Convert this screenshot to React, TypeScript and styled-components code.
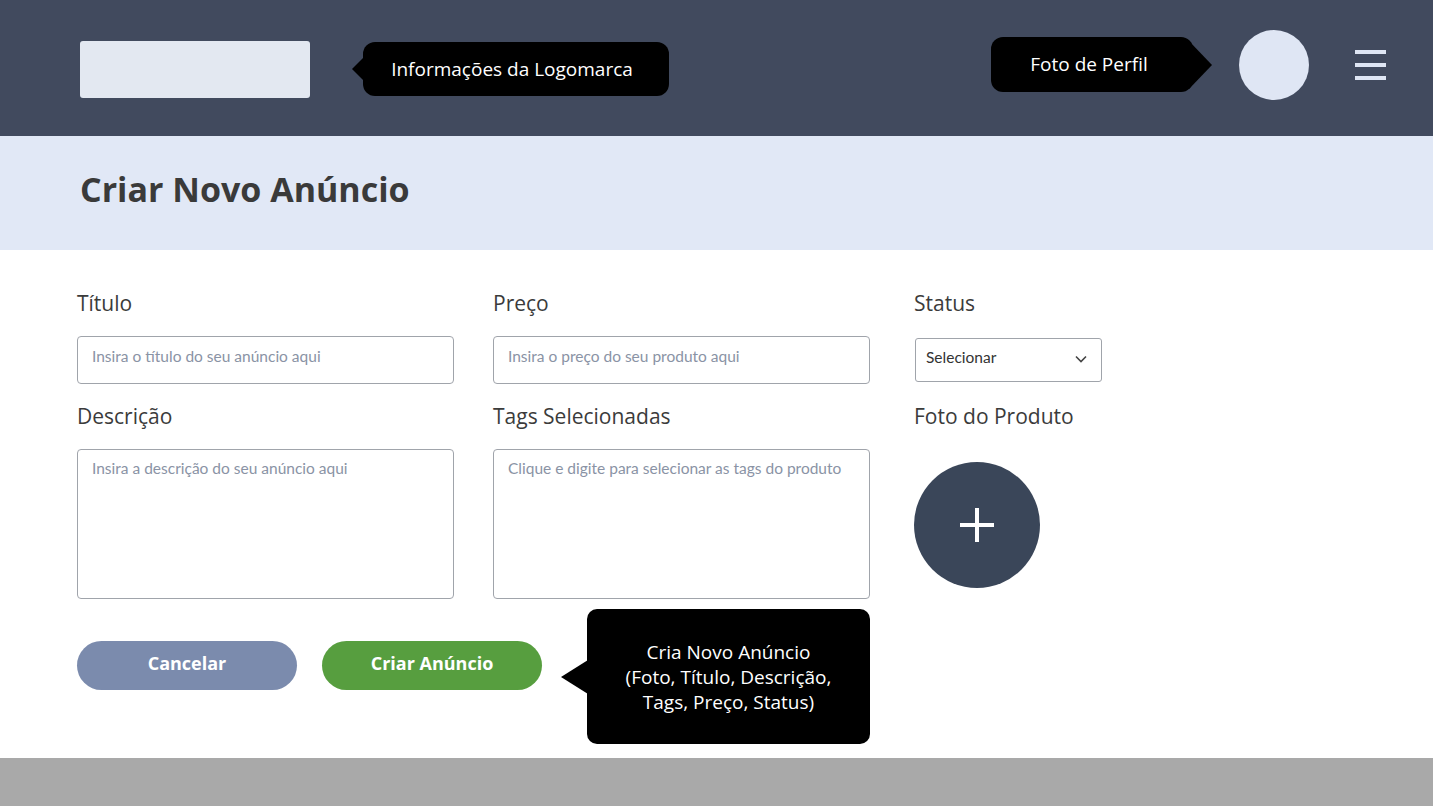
import React from "react";
import styled, { createGlobalStyle } from "styled-components";

const Global = createGlobalStyle`
  html, body { margin: 0; padding: 0; background: #ffffff; }
  body { font-family: "Open Sans", "Noto Sans", sans-serif; }
  * { box-sizing: border-box; }
`;

const Page = styled.div`
  width: 1433px;
  height: 806px;
  display: flex;
  flex-direction: column;
  overflow: hidden;
`;

const Header = styled.header`
  height: 136px;
  background: #414a5e;
  display: flex;
  align-items: center;
  padding: 0 47px 0 80px;
`;

const LogoBox = styled.div`
  width: 230px;
  height: 57px;
  background: #e3e8f1;
  border-radius: 3px;
  margin-top: 3px;
`;

const Spacer = styled.div`
  flex: 1;
`;

const Bubble = styled.div<{
  $side: "left" | "right";
  $w: number;
  $h: number;
  $aw: number;
  $ah: number;
}>`
  position: relative;
  width: ${(p) => p.$w}px;
  height: ${(p) => p.$h}px;
  background: #000;
  color: #fff;
  border-radius: 12px;
  display: flex;
  align-items: center;
  justify-content: center;
  text-align: center;
  font-family: "Open Sans", "Noto Sans", sans-serif;
  font-size: 19px;
  line-height: 25px;
  &::before {
    content: "";
    position: absolute;
    top: 50%;
    transform: translateY(-50%);
    border-top: ${(p) => p.$ah}px solid transparent;
    border-bottom: ${(p) => p.$ah}px solid transparent;
    ${(p) =>
      p.$side === "left"
        ? `right: calc(100% - 1px); border-right: ${p.$aw}px solid #000;`
        : `left: calc(100% - 4px); border-left: ${p.$aw}px solid #000;`}
  }
`;

const LogoTip = styled(Bubble)`
  margin-left: 53px;
  margin-top: 2px;
  padding-left: 4px;
  padding-right: 12px;
`;

const ProfileTip = styled(Bubble)`
  margin-top: -7px;
  padding-right: 6px;
`;

const Avatar = styled.div`
  width: 70px;
  height: 70px;
  border-radius: 50%;
  background: #dfe6f4;
  margin-left: 46px;
  margin-top: -6px;
`;

const Burger = styled.div`
  margin-left: 46px;
  margin-top: -6px;
  width: 31px;
  display: flex;
  flex-direction: column;
  gap: 9.5px;
  span {
    display: block;
    height: 3.5px;
    background: #dfe6f4;
  }
`;

const TitleBand = styled.div`
  height: 114px;
  background: #e1e8f6;
  display: flex;
  align-items: center;
  padding-left: 80px;
`;

const Title = styled.h1`
  margin: 0 0 9px 0;
  font-family: "Open Sans", "Noto Sans", sans-serif;
  font-weight: 700;
  font-size: 34px;
  color: #3a3a3a;
`;

const Content = styled.main`
  flex: 1;
  background: #fff;
  padding: 38px 0 0 77px;
`;

const Grid = styled.div`
  display: grid;
  grid-template-columns: 416px 421px 1fr;
  row-gap: 17px;
`;

const Field = styled.div`
  display: flex;
  flex-direction: column;
`;

const Label = styled.label`
  font-family: "Open Sans", "Noto Sans", sans-serif;
  font-size: 21px;
  line-height: 30px;
  color: #3b3b3b;
  margin-bottom: 18px;
`;

const Input = styled.input`
  width: 377px;
  height: 48px;
  border: 1px solid #a0a4ab;
  border-radius: 4px;
  padding: 0 14px 8px;
  font-family: Lato, sans-serif;
  font-size: 15.5px;
  color: #333;
  outline: none;
  &::placeholder { color: #8a93a5; }
`;

const TextArea = styled.textarea`
  width: 377px;
  height: 150px;
  border: 1px solid #a0a4ab;
  border-radius: 4px;
  padding: 9px 14px;
  font-family: Lato, sans-serif;
  font-size: 15.5px;
  color: #333;
  resize: none;
  outline: none;
  &::placeholder { color: #8a93a5; }
`;

const Select = styled.div`
  width: 187px;
  height: 44px;
  margin-top: 2px;
  margin-left: 1px;
  border: 1px solid #a0a4ab;
  border-radius: 3px;
  display: flex;
  align-items: center;
  justify-content: space-between;
  padding: 0 14px 6px 10px;
  font-family: Lato, sans-serif;
  font-size: 15.5px;
  color: #333;
  svg { margin-top: 4px; }
`;

const PlusCircle = styled.div`
  width: 126px;
  height: 126px;
  border-radius: 50%;
  background: #3a4659;
  display: flex;
  align-items: center;
  justify-content: center;
  margin-top: 13px;
`;

const Actions = styled.div`
  display: flex;
  align-items: flex-start;
  margin-top: 10px;
`;

const Button = styled.button<{ $bg: string }>`
  width: 220px;
  height: 49px;
  margin-top: 32px;
  padding: 0 0 5px;
  border: none;
  border-radius: 25px;
  background: ${(p) => p.$bg};
  color: #fff;
  font-family: "Open Sans", "Noto Sans", sans-serif;
  font-weight: 700;
  font-size: 18px;
  & + & { margin-left: 25px; }
`;

const CreateTip = styled(Bubble)`
  margin-left: 45px;
  border-radius: 10px;
  padding-top: 2px;
`;

const Footer = styled.footer`
  height: 48px;
  background: #a9a9a9;
`;

export default function App() {
  return (
    <Page>
      <Global />
      <Header>
        <LogoBox />
        <LogoTip $side="left" $w={306} $h={54} $aw={12} $ah={12}>
          Informações da Logomarca
        </LogoTip>
        <Spacer />
        <ProfileTip $side="right" $w={202} $h={55} $aw={23} $ah={24}>
          Foto de Perfil
        </ProfileTip>
        <Avatar />
        <Burger>
          <span />
          <span />
          <span />
        </Burger>
      </Header>
      <TitleBand>
        <Title>Criar Novo Anúncio</Title>
      </TitleBand>
      <Content>
        <Grid>
          <Field>
            <Label>Título</Label>
            <Input placeholder="Insira o título do seu anúncio aqui" />
          </Field>
          <Field>
            <Label>Preço</Label>
            <Input placeholder="Insira o preço do seu produto aqui" />
          </Field>
          <Field>
            <Label>Status</Label>
            <Select>
              <span>Selecionar</span>
              <svg width="12" height="8" viewBox="0 0 12 8" fill="none">
                <path d="M1 1.5L6 6.5L11 1.5" stroke="#444" strokeWidth="1.6" />
              </svg>
            </Select>
          </Field>
          <Field>
            <Label>Descrição</Label>
            <TextArea placeholder="Insira a descrição do seu anúncio aqui" />
          </Field>
          <Field>
            <Label>Tags Selecionadas</Label>
            <TextArea placeholder="Clique e digite para selecionar as tags do produto" />
          </Field>
          <Field>
            <Label>Foto do Produto</Label>
            <PlusCircle>
              <svg width="34" height="34" viewBox="0 0 34 34">
                <rect x="15" y="0" width="4" height="34" fill="#fff" />
                <rect x="0" y="15" width="34" height="4" fill="#fff" />
              </svg>
            </PlusCircle>
          </Field>
        </Grid>
        <Actions>
          <Button $bg="#7b8bad">Cancelar</Button>
          <Button $bg="#579e3f">Criar Anúncio</Button>
          <CreateTip $side="left" $w={283} $h={135} $aw={27} $ah={17}>
            Cria Novo Anúncio
            <br />
            (Foto, Título, Descrição,
            <br />
            Tags, Preço, Status)
          </CreateTip>
        </Actions>
      </Content>
      <Footer />
    </Page>
  );
}
